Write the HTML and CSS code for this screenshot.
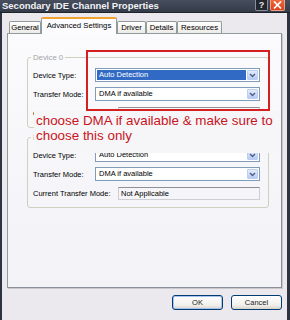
FILE: index.html
```html
<!DOCTYPE html>
<html>
<head>
<meta charset="utf-8" />
<title>Secondary IDE Channel Properties</title>
<link rel="stylesheet" href="styles.css">
</head>

<body>
<div class="window">
	<div class="titlebar">
		<span class="title">Secondary IDE Channel Properties</span>
		<span class="caption-btn help">?</span>
		<span class="caption-btn close"><svg width="9" height="8" viewBox="0 0 9 8"><path d="M1 0.5L8 7.5M8 0.5L1 7.5" stroke="#fff" stroke-width="1.7" fill="none"/></svg></span>
	</div>
	<div class="client">
		<div class="tabs">
			<span class="tab tab-general">General</span>
			<span class="tab tab-advanced selected">Advanced Settings</span>
			<span class="tab tab-driver">Driver</span>
			<span class="tab tab-details">Details</span>
			<span class="tab tab-resources">Resources</span>
		</div>
		<div class="panel">
			<fieldset class="group">
				<legend>Device 0</legend>
				<div class="row">
					<span class="label">Device Type:</span>
					<span class="combo"><span class="value focused">Auto Detection</span><span class="drop"><svg width="7" height="5" viewBox="0 0 7 5"><path d="M1 1L3.5 3.6L6 1" stroke="#4d6185" stroke-width="1.4" fill="none"/></svg></span></span>
				</div>
				<div class="row">
					<span class="label">Transfer Mode:</span>
					<span class="combo"><span class="value">DMA if available</span><span class="drop"><svg width="7" height="5" viewBox="0 0 7 5"><path d="M1 1L3.5 3.6L6 1" stroke="#4d6185" stroke-width="1.4" fill="none"/></svg></span></span>
				</div>
				<div class="row">
					<span class="label label-long">Current Transfer Mode:</span>
					<span class="static">Not Applicable</span>
				</div>
			</fieldset>
			<fieldset class="group group-second">
				<legend>Device 1</legend>
				<div class="row">
					<span class="label">Device Type:</span>
					<span class="combo"><span class="value">Auto Detection</span><span class="drop"><svg width="7" height="5" viewBox="0 0 7 5"><path d="M1 1L3.5 3.6L6 1" stroke="#4d6185" stroke-width="1.4" fill="none"/></svg></span></span>
				</div>
				<div class="row">
					<span class="label">Transfer Mode:</span>
					<span class="combo"><span class="value">DMA if available</span><span class="drop"><svg width="7" height="5" viewBox="0 0 7 5"><path d="M1 1L3.5 3.6L6 1" stroke="#4d6185" stroke-width="1.4" fill="none"/></svg></span></span>
				</div>
				<div class="row">
					<span class="label label-long">Current Transfer Mode:</span>
					<span class="static">Not Applicable</span>
				</div>
			</fieldset>
			<div class="mark"></div>
			<div class="note">choose DMA if available &amp; make sure to<br />choose this only</div>
		</div>
		<div class="buttons">
			<span class="btn default">OK</span>
			<span class="btn">Cancel</span>
		</div>
	</div>
</div>
</body>
</html>
```

FILE: styles.css
```css
body {
	margin:0;
	padding:0;
	background:#ebe9ed;
	font-family:"Liberation Sans", Arial, sans-serif;
	color:#000;}
.window {
	width:290px;
	height:320px;
	overflow:hidden;
	background:#ebe9ed;}
.titlebar {
	display:flex;
	height:12px;
	background:linear-gradient(#474f5f, #333a48);
	border-bottom:1px solid #1f232c;}
.title {
	flex:1;
	padding-left:2px;
	font-size:9.5px;
	font-weight:bold;
	line-height:11px;
	color:#f2f2f4;
	white-space:nowrap;}
.caption-btn {
	display:flex;
	align-items:center;
	justify-content:center;
	height:11px;
	box-sizing:border-box;
	border:1px solid #8a8f99;
	border-top:none;
	border-radius:0 0 2px 2px;}
.help {
	width:13px;
	margin-right:2px;
	background:#23262d;
	color:#e8e8ea;
	font-size:9px;
	font-weight:bold;
	line-height:10px;}
.close {
	width:15px;
	margin-right:5px;
	background:linear-gradient(#ee6a3e, #d8421c);
	border-color:#f0a080;}
.client {
	height:307px;
	padding:0 5px;
	border-left:2px solid #2d3340;
	border-right:3px solid #2d3340;}
.tabs {
	display:flex;
	align-items:flex-end;
	height:16px;
	padding:4px 0 0 2px;}
.tab {
	height:12px;
	box-sizing:border-box;
	border:1px solid #919b9c;
	border-bottom:none;
	border-radius:2px 2px 0 0;
	background:linear-gradient(#ffffff, #ecebe6);
	font-size:7.75px;
	line-height:11px;
	text-align:center;
	white-space:nowrap;}
.tab.selected {
	position:relative;
	z-index:1;
	height:17px;
	margin-bottom:-1px;
	border-top:2px solid #f0a232;
	background:#fcfcfe;
	line-height:13px;}
.tab-general {width:32px;}
.tab-advanced {width:76px;}
.tab-driver {width:29px;}
.tab-details {width:31px;}
.tab-resources {width:45px;}
.panel {
	position:relative;
	height:255px;
	box-sizing:border-box;
	padding:19px 0 0 19px;
	border:1px solid #919b9c;
	border-right-color:#8b8f99;
	border-bottom-color:#8b8f99;
	box-shadow:1px 1px 0 #c9c8cc;
	background:linear-gradient(#fbfbfd, #f2f2f7);}
.group {
	width:242px;
	box-sizing:border-box;
	margin:0;
	padding:6px 0 7px 5px;
	border:1px solid #d0d0bf;
	border-radius:3px;}
.group legend {
	margin-left:-2px;
	padding:0 2px;
	font-size:7.75px;
	line-height:9px;
	color:#a3a3a3;}
.group-second {margin-top:5px;}
.row {
	display:flex;
	align-items:center;
	height:14px;
	margin-top:5px;
	font-size:7.5px;}
.row:first-of-type {margin-top:0;}
.label {
	width:62px;
	flex-shrink:0;
	white-space:nowrap;}
.label-long {width:85px;}
.combo {
	display:flex;
	width:165px;
	height:14px;
	box-sizing:border-box;
	border:1px solid #7f9db9;
	background:#fff;}
.value {
	flex:1;
	margin:1px 0 1px 1px;
	padding-left:2px;
	line-height:10px;
	white-space:nowrap;}
.value.focused {
	background:#316ac5;
	color:#fff;}
.drop {
	display:flex;
	align-items:center;
	justify-content:center;
	width:11px;
	margin:1px;
	box-sizing:border-box;
	border:1px solid #bacdf3;
	border-radius:1px;
	background:linear-gradient(#e4ecfc, #b8cbf3);}
.static {
	width:142px;
	height:13px;
	box-sizing:border-box;
	padding-left:2px;
	border:1px solid #cdcdd3;
	border-top-color:#8f8f98;
	line-height:11px;
	white-space:nowrap;}
.mark {
	position:absolute;
	left:78px;
	top:16px;
	width:184px;
	height:61px;
	box-sizing:border-box;
	border:2px solid #d42020;}
.note {
	position:absolute;
	left:26px;
	top:77px;
	width:246px;
	height:42px;
	box-sizing:border-box;
	padding:2px 0 0 2px;
	background:#f6f6f9;
	color:#c8141c;
	font-size:13.4px;
	line-height:15px;
	white-space:nowrap;}
.buttons {
	display:flex;
	justify-content:flex-end;
	gap:8px;
	margin-top:7px;}
.btn {
	width:51px;
	height:15px;
	box-sizing:border-box;
	border:1px solid #003c74;
	border-radius:3px;
	background:linear-gradient(#ffffff, #f1f0ec 70%, #d8d3c8);
	font-size:7.5px;
	line-height:13px;
	text-align:center;
	color:#222;}
.btn.default {box-shadow:inset 0 0 0 1px #a9c3ef;}
```
